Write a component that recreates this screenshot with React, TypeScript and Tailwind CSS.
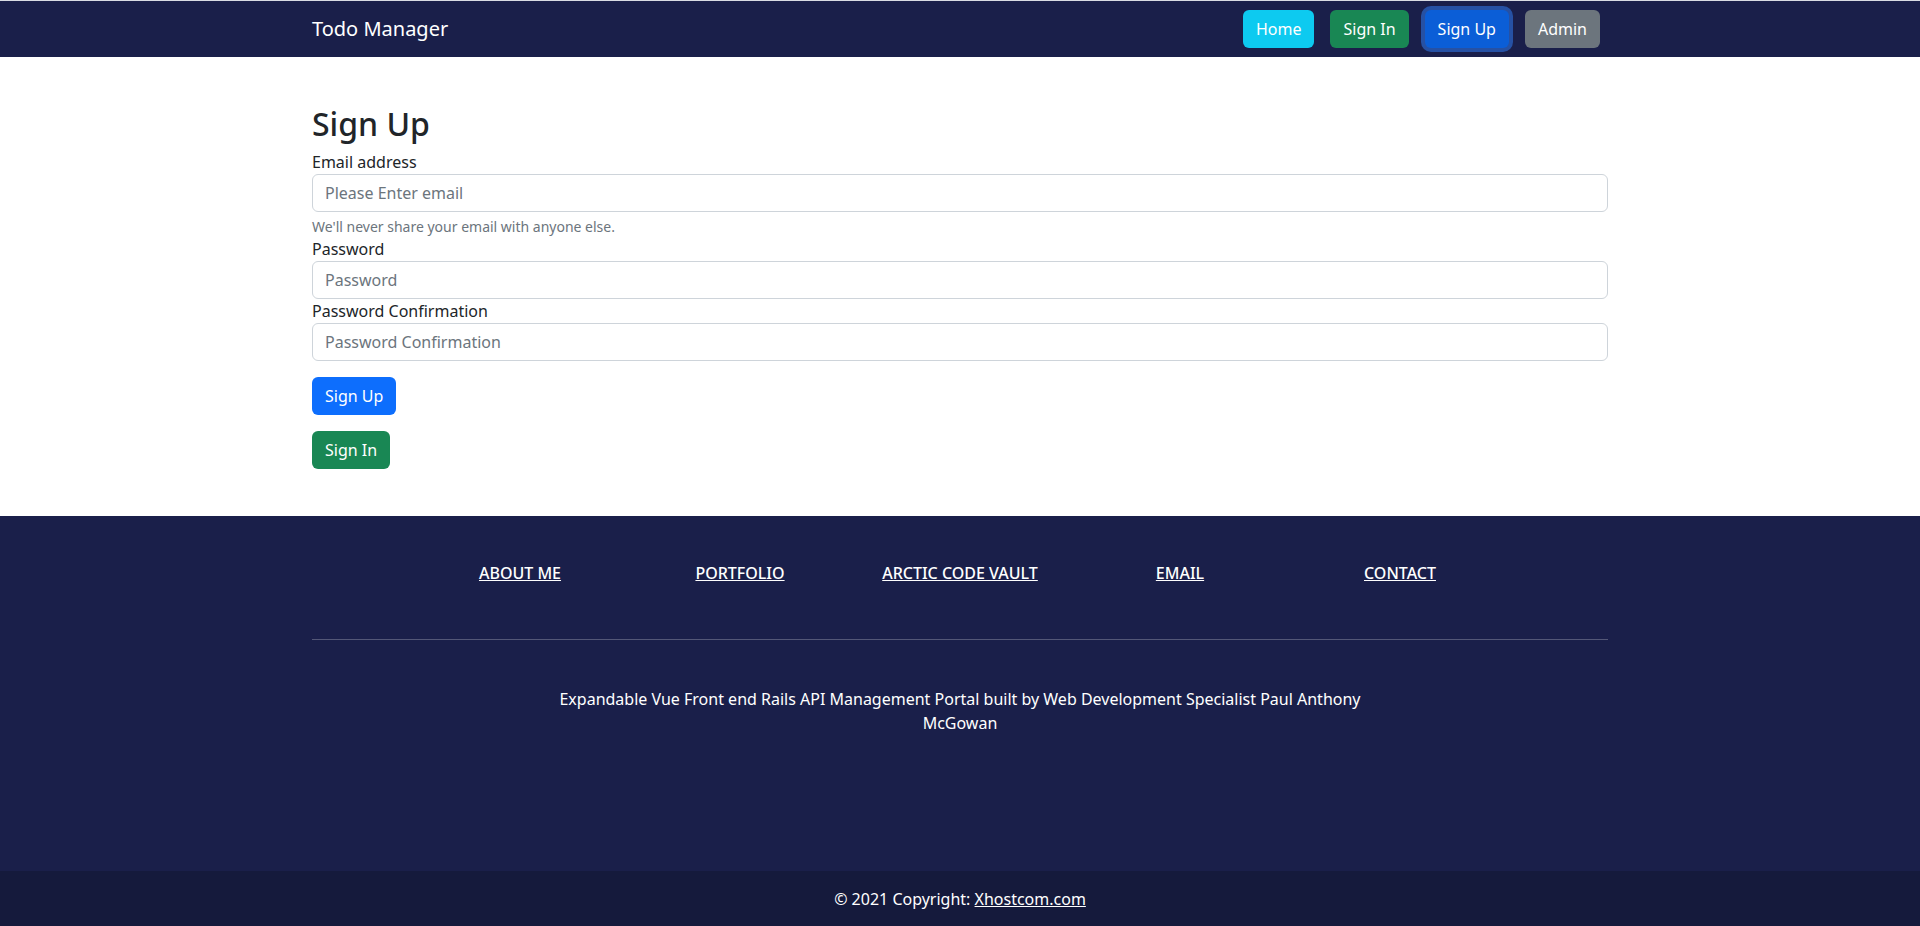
import React from "react";

export default function App() {
  return (
    <div className="flex min-h-screen flex-col bg-white font-['Noto_Sans',sans-serif] text-[#212529]">
      <nav className="h-[57px] border-t border-[#d9dce3] bg-[#1a1f4a]">
        <div className="mx-auto flex h-full w-[1296px] items-center justify-between">
          <a className="text-[20px] leading-[30px] text-white">Todo Manager</a>
          <div className="mr-2 flex items-center gap-4">
            <button className="h-[38px] rounded-[6px] border border-transparent bg-[#0dcaf0] px-3 text-base leading-6 text-white">Home</button>
            <button className="h-[38px] rounded-[6px] border border-transparent bg-[#198754] px-3 text-base leading-6 text-white">Sign In</button>
            <button className="h-[38px] rounded-[6px] border border-transparent bg-[#0b5ed7] px-3 text-base leading-6 text-white shadow-[0_0_0_4px_rgba(49,132,253,0.5)]">Sign Up</button>
            <button className="h-[38px] rounded-[6px] border border-transparent bg-[#6c757d] px-3 text-base leading-6 text-white">Admin</button>
          </div>
        </div>
      </nav>

      <main className="bg-white">
        <div className="mx-auto w-[1296px] pb-[47px] pt-[48px]">
          <h2 className="mb-[7px] text-[32px] font-medium leading-[38.4px]">Sign Up</h2>
          <form onSubmit={(e) => e.preventDefault()}>
            <label className="block text-base leading-6">Email address</label>
            <input
              type="email"
              placeholder="Please Enter email"
              className="block h-[38px] w-full rounded-[6px] border border-[#ced4da] bg-white px-3 text-base text-[#212529] outline-none placeholder:text-[#6c757d]"
            />
            <div className="mt-1 text-[14px] leading-[21px] text-[#6c757d]">We'll never share your email with anyone else.</div>
            <label className="block text-base leading-6">Password</label>
            <input
              type="password"
              placeholder="Password"
              className="block h-[38px] w-full rounded-[6px] border border-[#ced4da] bg-white px-3 text-base text-[#212529] outline-none placeholder:text-[#6c757d]"
            />
            <label className="block text-base leading-6">Password Confirmation</label>
            <input
              type="password"
              placeholder="Password Confirmation"
              className="block h-[38px] w-full rounded-[6px] border border-[#ced4da] bg-white px-3 text-base text-[#212529] outline-none placeholder:text-[#6c757d]"
            />
            <button className="mt-4 block h-[38px] rounded-[6px] border border-transparent bg-[#0d6efd] px-3 text-base leading-6 text-white">Sign Up</button>
          </form>
          <button className="mt-4 block h-[38px] rounded-[6px] border border-transparent bg-[#198754] px-3 text-base leading-6 text-white">Sign In</button>
        </div>
      </main>

      <footer className="flex flex-1 flex-col bg-[#1a1f4a] text-white">
        <div className="pb-[136px] pt-[45px]">
          <div className="mx-auto grid w-[1100px] grid-cols-5">
            {["ABOUT ME", "PORTFOLIO", "ARCTIC CODE VAULT", "EMAIL", "CONTACT"].map((l) => (
              <div key={l} className="text-center">
                <a className="text-base font-medium leading-[19.2px] text-white underline">{l}</a>
              </div>
            ))}
          </div>
          <div className="mx-auto mt-[54px] w-[1296px] border-t border-white/25" />
          <div className="mx-auto mt-[47px] w-[856px] text-center text-base leading-6 text-white">
            Expandable Vue Front end Rails API Management Portal built by Web Development Specialist Paul Anthony McGowan
          </div>
        </div>
        <div className="flex-1 bg-[#151a3c] pb-[13px] pt-[16px] text-center text-base leading-6 text-white">
          © 2021 Copyright: <a className="text-white underline">Xhostcom.com</a>
        </div>
      </footer>
    </div>
  );
}
